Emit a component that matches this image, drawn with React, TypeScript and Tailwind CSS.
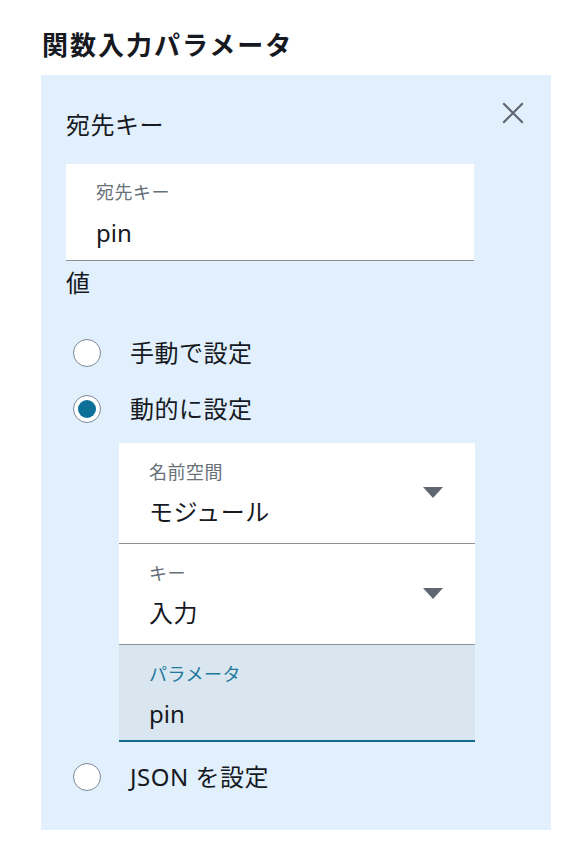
const font = "font-['Noto_Sans','Noto_Sans_CJK_JP',sans-serif]";

function Radio({ checked, label }: { checked?: boolean; label: string }) {
  return (
    <div className="flex items-center h-[28px]">
      <span className="flex items-center justify-center w-[28px] h-[28px] rounded-full border border-[#7d8998] bg-white ml-[7px]">
        {checked && <span className="w-[18px] h-[18px] rounded-full bg-[#0b6f97]" />}
      </span>
      <span className="ml-[29px] text-[24px] leading-[34px] tracking-[0.5px] text-[#16191f]">{label}</span>
    </div>
  );
}

function Caret() {
  return (
    <svg width="20" height="11" viewBox="0 0 20 11" className="shrink-0 mt-[27px]">
      <path d="M0 0 L20 0 L10 11 Z" fill="#5f6672" />
    </svg>
  );
}

function SelectField({ label, value }: { label: string; value: string }) {
  return (
    <div className="h-[101px] bg-white border-b border-[#8d9199] flex items-start pt-[17px] pl-[30px] pr-[32px]">
      <div className="flex-1">
        <div className="text-[18px] leading-[24px] tracking-[0.5px] text-[#687078]">{label}</div>
        <div className="mt-[12px] text-[24px] leading-[32px] tracking-[0.5px] text-[#16191f]">{value}</div>
      </div>
      <Caret />
    </div>
  );
}

export default function App() {
  return (
    <div className={`${font} w-[566px] h-[846px] bg-white pt-[27px]`}>
      <h1 className="ml-[42px] text-[26px] leading-[36px] tracking-[2px] font-bold text-[#16191f]">関数入力パラメータ</h1>
      <div className="mt-[12px] ml-[41px] w-[510px] h-[755px] bg-[#e1f0fc] pt-[27px] pl-[25px] pr-[27px]">
        <div className="flex items-start justify-between">
          <div className="mt-[6px] text-[24px] leading-[34px] tracking-[0.5px] text-[#16191f]">宛先キー</div>
          <svg width="22" height="22" viewBox="0 0 22 22">
            <path d="M2 2 L20 20 M20 2 L2 20" stroke="#5f6672" strokeWidth="2.2" strokeLinecap="square" />
          </svg>
        </div>
        <div className="mt-[22px] w-[408px] h-[97px] bg-white border-b border-[#8d9199] pl-[30px] pt-[16px]">
          <div className="text-[18px] leading-[24px] tracking-[0.5px] text-[#687078]">宛先キー</div>
          <div className="mt-[13px] text-[24px] leading-[32px] text-[#16191f]">pin</div>
        </div>
        <div className="mt-[5px] text-[24px] leading-[34px] text-[#16191f]">値</div>
        <div className="mt-[39px] flex flex-col gap-[28px]">
          <Radio label="手動で設定" />
          <Radio checked label="動的に設定" />
        </div>
        <div className="mt-[20px] ml-[53px] w-[356px]">
          <SelectField label="名前空間" value="モジュール" />
          <SelectField label="キー" value="入力" />
          <div className="h-[97px] bg-[#d9e6f0] border-b-2 border-[#0f6a8f] pl-[30px] pt-[17px]">
            <div className="text-[18px] leading-[24px] tracking-[0.5px] text-[#20799a]">パラメータ</div>
            <div className="mt-[12px] text-[24px] leading-[32px] text-[#16191f]">pin</div>
          </div>
        </div>
        <div className="mt-[21px]">
          <Radio label="JSON を設定" />
        </div>
      </div>
    </div>
  );
}
